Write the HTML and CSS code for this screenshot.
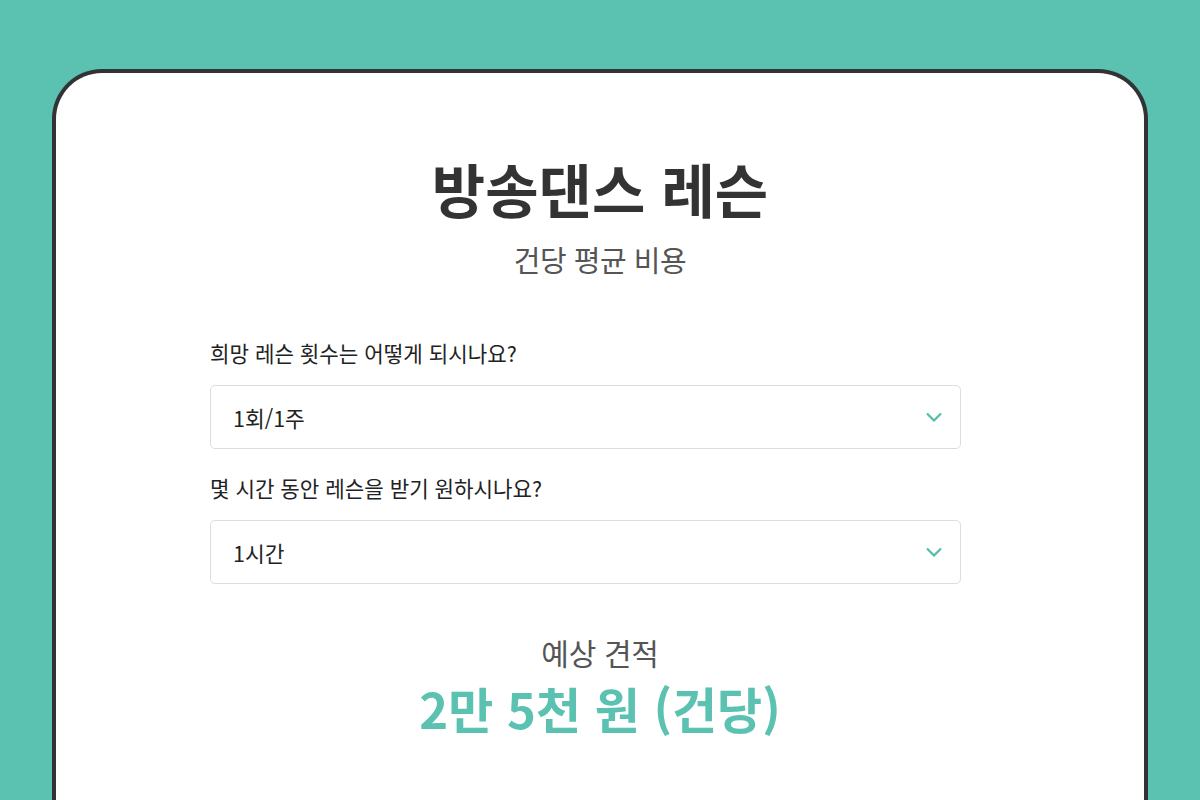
FILE: index.html
```html
<!DOCTYPE html>
<html lang="ko">
<head>
<meta charset="utf-8">
<link rel="stylesheet" href="styles.css">
</head>
<body>
<main class="card">
  <h1 class="title">방송댄스 레슨</h1>
  <p class="subtitle">건당 평균 비용</p>
  <form class="form">
    <label class="label">희망 레슨 횟수는 어떻게 되시나요?</label>
    <div class="select">
      <span>1회/1주</span>
      <svg class="chev" width="18" height="10" viewBox="0 0 18 10"><path d="M2 1.5l7 7 7-7" fill="none" stroke="#4fbfa8" stroke-width="2.2"/></svg>
    </div>
    <label class="label">몇 시간 동안 레슨을 받기 원하시나요?</label>
    <div class="select">
      <span>1시간</span>
      <svg class="chev" width="18" height="10" viewBox="0 0 18 10"><path d="M2 1.5l7 7 7-7" fill="none" stroke="#4fbfa8" stroke-width="2.2"/></svg>
    </div>
  </form>
  <p class="est-label">예상 견적</p>
  <p class="price">2만 5천 원 (건당)</p>
</main>
</body>
</html>
```
FILE: styles.css
```css
html, body {
  margin: 0;
  padding: 0;
  background: #5bc2b1;
  height: 800px;
  overflow: hidden;
}
body {
  font-family: "Noto Sans CJK KR", "Noto Sans", sans-serif;
  padding-top: 69px;
}
.card {
  box-sizing: border-box;
  width: 1096px;
  height: 731px;
  margin-left: 52px;
  background: #fff;
  border: 4px solid #333;
  border-bottom: none;
  border-radius: 50px 50px 0 0;
  padding-top: 75px;
  display: flex;
  flex-direction: column;
  align-items: center;
}
.title {
  margin: 0;
  font-size: 58px;
  font-weight: 700;
  color: #333;
  line-height: 80px;
}
.subtitle {
  margin: 11px 0 0;
  font-size: 29px;
  color: #555;
  line-height: 40px;
  letter-spacing: -0.5px;
}
.form {
  align-self: flex-start;
  margin: 59px 0 0 154px;
  width: 751px;
  display: flex;
  flex-direction: column;
}
.label {
  font-size: 21.2px;
  color: #222;
  line-height: 30px;
  margin-bottom: 17px;
}
.select {
  box-sizing: border-box;
  height: 64px;
  border: 1px solid #ddd;
  border-radius: 5px;
  display: flex;
  align-items: center;
  justify-content: space-between;
  padding: 0 17px 0 22px;
  font-size: 21.5px;
  color: #222;
  margin-bottom: 24px;
}
.est-label {
  margin: 24px 0 0;
  font-size: 30px;
  color: #555;
  line-height: 40px;
  letter-spacing: -0.3px;
}
.price {
  margin: 4px 0 0;
  font-size: 49px;
  font-weight: 700;
  color: #5bc2b1;
  line-height: 64px;
}
```
